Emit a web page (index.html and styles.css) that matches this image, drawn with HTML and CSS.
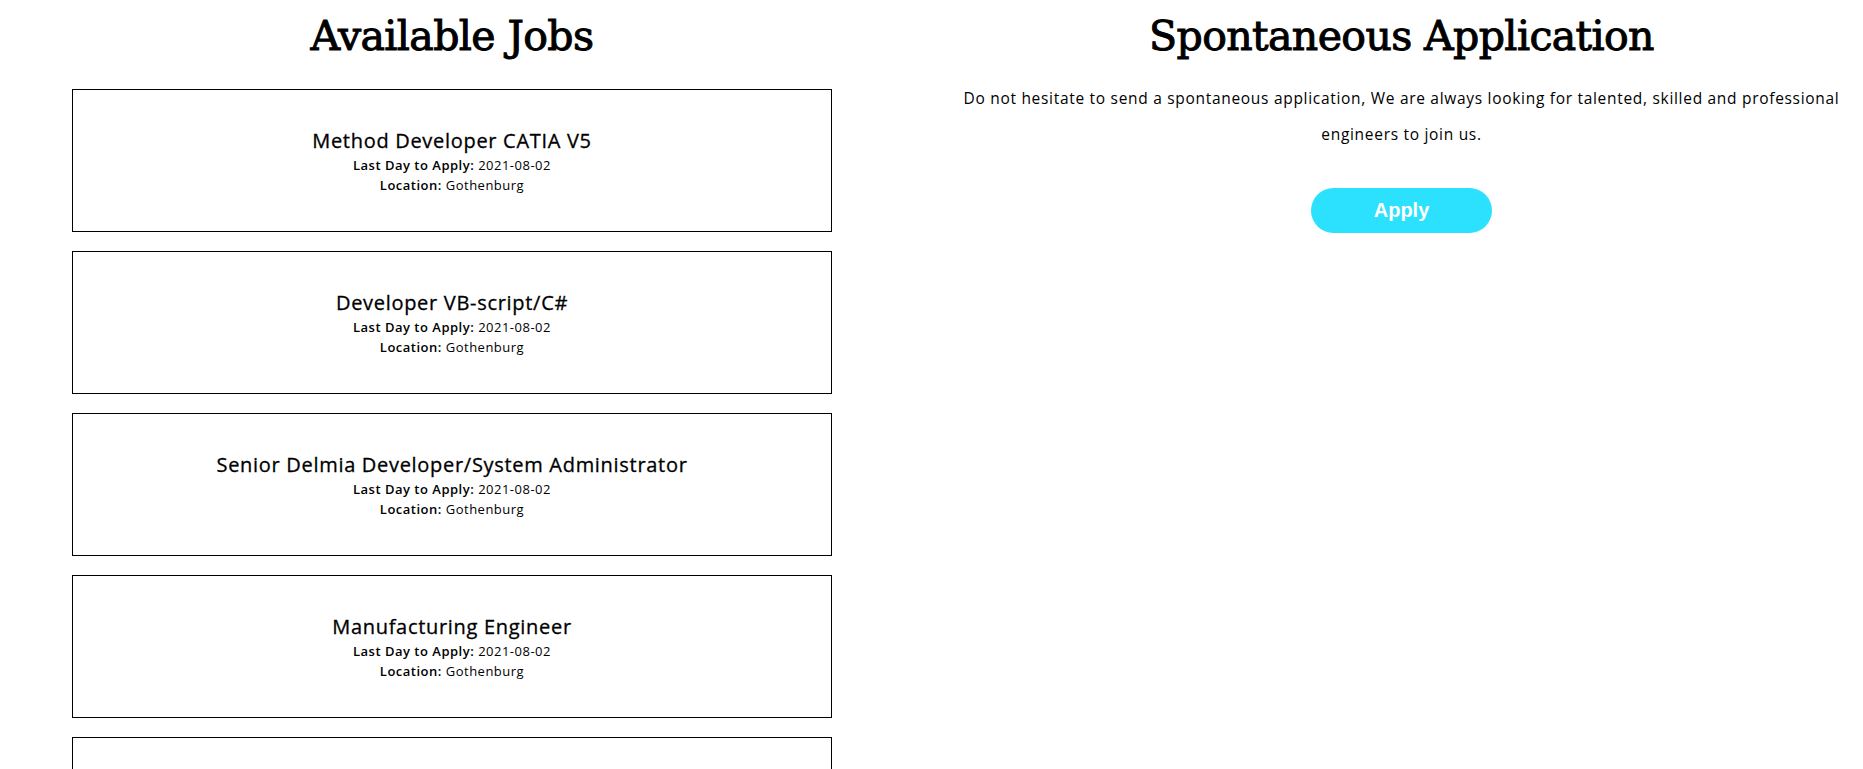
FILE: index.html
```html
<!DOCTYPE html>
<html lang="en">
<head>
<meta charset="utf-8">
<title>Careers</title>
<link rel="stylesheet" href="styles.css">
</head>
<body>
<main class="page">
  <section class="jobs">
    <h1 class="heading">Available Jobs</h1>
    <div class="job-list">
      <article class="job-card">
        <h2 class="job-title">Method Developer CATIA V5</h2>
        <p class="job-meta"><strong>Last Day to Apply:</strong> 2021-08-02</p>
        <p class="job-meta"><strong>Location:</strong> Gothenburg</p>
      </article>
      <article class="job-card">
        <h2 class="job-title">Developer VB-script/C#</h2>
        <p class="job-meta"><strong>Last Day to Apply:</strong> 2021-08-02</p>
        <p class="job-meta"><strong>Location:</strong> Gothenburg</p>
      </article>
      <article class="job-card">
        <h2 class="job-title">Senior Delmia Developer/System Administrator</h2>
        <p class="job-meta"><strong>Last Day to Apply:</strong> 2021-08-02</p>
        <p class="job-meta"><strong>Location:</strong> Gothenburg</p>
      </article>
      <article class="job-card">
        <h2 class="job-title">Manufacturing Engineer</h2>
        <p class="job-meta"><strong>Last Day to Apply:</strong> 2021-08-02</p>
        <p class="job-meta"><strong>Location:</strong> Gothenburg</p>
      </article>
      <article class="job-card">
        <h2 class="job-title">Design Engineer</h2>
        <p class="job-meta"><strong>Last Day to Apply:</strong> 2021-08-02</p>
        <p class="job-meta"><strong>Location:</strong> Gothenburg</p>
      </article>
    </div>
  </section>
  <section class="spontaneous">
    <h1 class="heading">Spontaneous Application</h1>
    <p class="intro">Do not hesitate to send a spontaneous application, We are always looking for talented, skilled and professional engineers to join us.</p>
    <a class="apply-btn" href="#">Apply</a>
  </section>
</main>
</body>
</html>
```

FILE: styles.css
```css
* { box-sizing: border-box; }
html, body { margin: 0; padding: 0; background: #fff; }
body {
  font-family: "Open Sans", "Noto Sans", sans-serif;
  color: #000;
}
.page {
  display: grid;
  grid-template-columns: 903px 1fr;
  column-gap: 37px;
  width: 1863px;
}
.heading {
  margin: 0;
  padding-top: 6px;
  height: 89px;
  font-family: "DejaVu Serif", serif;
  font-weight: normal;
  font-size: 41px;
  line-height: 60px;
  text-align: center;
  letter-spacing: -0.6px;
  -webkit-text-stroke: 1px #000;
}
.jobs { padding: 0 71px 0 72px; }
.job-list {
  display: flex;
  flex-direction: column;
  gap: 19px;
}
.job-card {
  height: 143px;
  border: 1px solid #000;
  display: flex;
  flex-direction: column;
  align-items: center;
  justify-content: center;
  padding-top: 1px;
}
.job-title {
  margin: 0;
  font-size: 20px;
  font-weight: 500;
  line-height: 28px;
  letter-spacing: 0.7px;
  -webkit-text-stroke: 0.3px #000;
}
.job-meta {
  margin: 0;
  font-size: 13px;
  line-height: 20px;
  letter-spacing: 0.5px;
}
.job-meta strong { font-weight: 600; }
.spontaneous {
  display: flex;
  flex-direction: column;
  align-items: center;
  padding: 0 13px;
}
.spontaneous .heading { width: 100%; }
.intro {
  margin: -9px 0 0;
  font-size: 15.5px;
  line-height: 36px;
  text-align: center;
  letter-spacing: 0.7px;
}
.apply-btn {
  margin-top: 36px;
  width: 181px;
  height: 45px;
  border-radius: 23px;
  background: #2be1fd;
  color: #fff;
  font-family: "Liberation Sans", Arial, sans-serif;
  font-weight: bold;
  font-size: 20px;
  line-height: 45px;
  text-align: center;
  text-decoration: none;
}
```
